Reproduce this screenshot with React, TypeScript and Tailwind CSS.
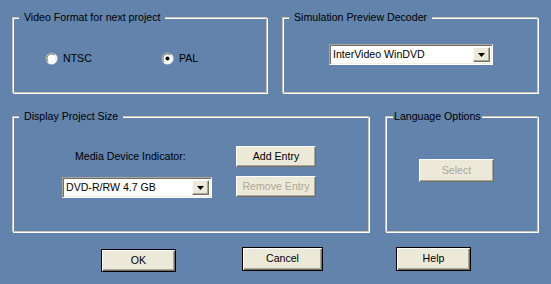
import React from 'react';

const face = 'bg-[#ece9d8]';

const Radio = ({ checked }: { checked?: boolean }) => (
  <svg width="13" height="13" viewBox="0 0 13 13" className="shrink-0">
    <circle cx="6.5" cy="6.5" r="5.5" fill="#fff" />
    <path d="M2.6 10.4 A5.5 5.5 0 0 1 10.4 2.6" fill="none" stroke="#aca899" strokeWidth="1" />
    <path d="M10.4 2.6 A5.5 5.5 0 0 1 2.6 10.4" fill="none" stroke="#fff" strokeWidth="1" />
    <path d="M3.3 9.7 A4.5 4.5 0 0 1 9.7 3.3" fill="none" stroke="#716f64" strokeWidth="1" />
    <path d="M9.7 3.3 A4.5 4.5 0 0 1 3.3 9.7" fill="none" stroke="#f1efe2" strokeWidth="1" />
    {checked && <circle cx="6.5" cy="6.5" r="2" fill="#000" />}
  </svg>
);

const Group = ({
  title,
  tight,
  className,
  children,
}: {
  title: string;
  tight?: boolean;
  className: string;
  children?: React.ReactNode;
}) => (
  <div
    className={`relative shrink-0 border border-[#c9c5b5] shadow-[1px_1px_0_#fff,inset_1px_1px_0_#fff] ${className}`}
  >
    <span
      className={`absolute top-[-8px] bg-[#6183ac] leading-[14px] whitespace-nowrap ${
        tight ? 'left-[7px] px-[1px]' : 'left-[6px] px-[5px]'
      }`}
    >
      {title}
    </span>
    {children}
  </div>
);

const Combo = ({ value, className }: { value: string; className: string }) => (
  <div
    className={`flex h-[21px] border border-t-[#aca899] border-l-[#aca899] border-r-white border-b-white shadow-[inset_1px_1px_0_#716f64,inset_-1px_-1px_0_#f1efe2] bg-white ${className}`}
  >
    <span className="flex-1 pl-[3px] pt-[3px] leading-[13px] whitespace-nowrap">{value}</span>
    <div
      className={`m-[2px] flex w-[17px] items-center justify-center ${face} border border-t-white border-l-white border-r-[#716f64] border-b-[#716f64] shadow-[inset_-1px_-1px_0_#aca899]`}
    >
      <svg width="7" height="4" viewBox="0 0 7 4">
        <path d="M0 0 H7 L3.5 4 Z" fill="#000" />
      </svg>
    </div>
  </div>
);

const Btn = ({
  label,
  disabled,
  className,
}: {
  label: string;
  disabled?: boolean;
  className: string;
}) => (
  <div
    className={`flex items-center justify-center ${face} border border-t-white border-l-white border-r-[#716f64] border-b-[#716f64] shadow-[inset_-1px_-1px_0_#aca899] ${
      disabled ? 'text-[#aca899]' : 'text-black'
    } ${className}`}
  >
    {label}
  </div>
);

const BigBtn = ({ label, className }: { label: string; className: string }) => (
  <div
    className={`flex items-center justify-center ${face} border border-black shadow-[inset_1px_1px_0_#fff,inset_-1px_-1px_0_#716f64,inset_-2px_-2px_0_#aca899] ${className}`}
  >
    {label}
  </div>
);

export default function App() {
  return (
    <div className="h-[284px] w-[551px] overflow-hidden bg-[#6183ac] font-['Liberation_Sans',Arial,sans-serif] text-[10.6px] text-black">
      <div className="flex flex-col pl-[12px] pt-[17px]">
        <div className="flex gap-[15px]">
          <Group title="Video Format for next project" className="h-[76px] w-[255px]">
            <div className="flex pl-[32px] pt-[33px]">
              <label className="flex w-[116px] items-center gap-[5px]">
                <Radio />
                <span>NTSC</span>
              </label>
              <label className="flex items-center gap-[5px]">
                <Radio checked />
                <span>PAL</span>
              </label>
            </div>
          </Group>
          <Group title="Simulation Preview Decoder" className="h-[76px] w-[256px]">
            <div className="pl-[46px] pt-[26px]">
              <Combo value="InterVideo WinDVD" className="w-[164px]" />
            </div>
          </Group>
        </div>

        <div className="mt-[23px] flex gap-[16px]">
          <Group title="Display Project Size" className="h-[116px] w-[357px]">
            <div className="grid grid-cols-[150px_80px] gap-x-[24px] gap-y-[9px] pl-[49px] pt-[29px]">
              <div className="flex items-center pl-[13px]">Media Device Indicator:</div>
              <Btn label="Add Entry" className="h-[21px]" />
              <Combo value="DVD-R/RW 4.7 GB" className="mt-[1px]" />
              <Btn label="Remove Entry" disabled className="h-[21px]" />
            </div>
          </Group>
          <Group title="Language Options" tight className="h-[116px] w-[153px]">
            <div className="pl-[33px] pt-[42px]">
              <Btn label="Select" disabled className="h-[23px] w-[75px]" />
            </div>
          </Group>
        </div>

        <div className="mt-[15px] flex items-start">
          <BigBtn label="OK" className="ml-[89px] mt-[2px] h-[23px] w-[75px]" />
          <BigBtn label="Cancel" className="ml-[66px] h-[24px] w-[81px]" />
          <BigBtn label="Help" className="ml-[73px] h-[24px] w-[75px]" />
        </div>
      </div>
    </div>
  );
}
